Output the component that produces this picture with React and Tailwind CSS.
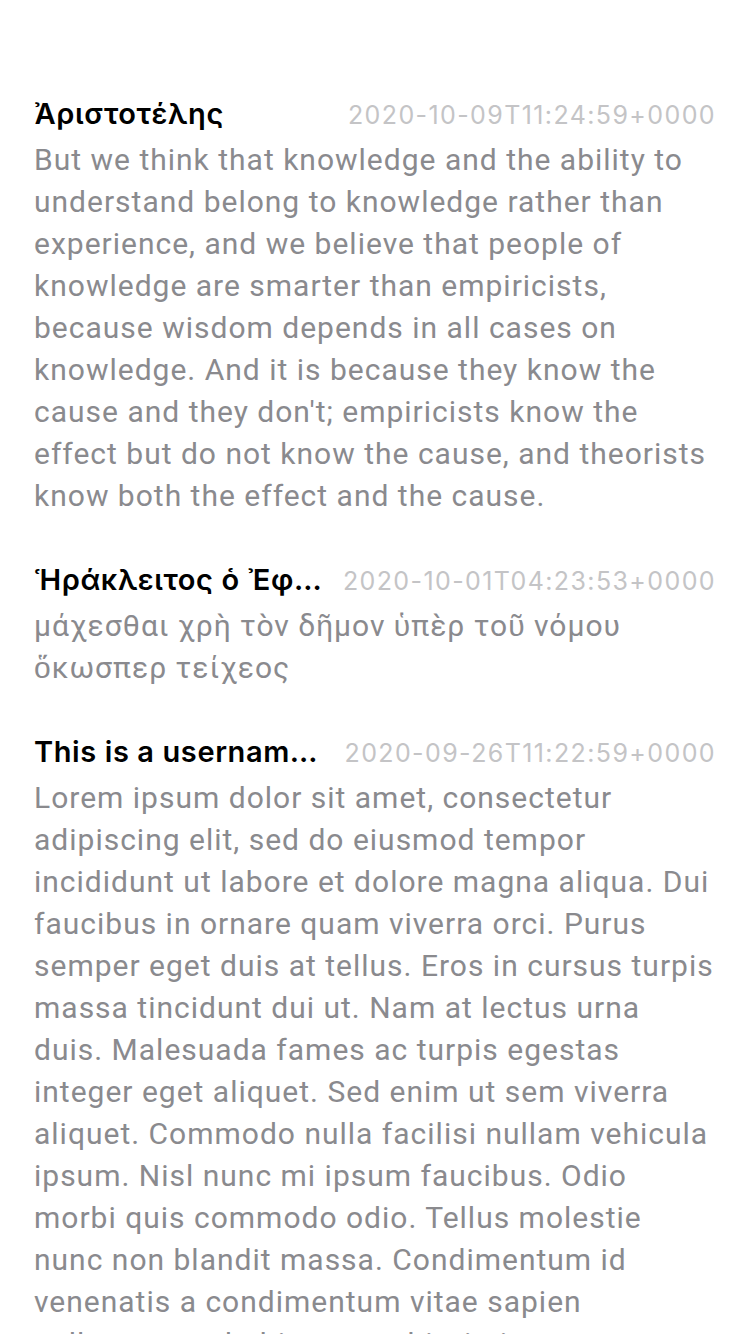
const posts = [
  {
    name: 'Ἀριστοτέλης',
    time: '2020-10-09T11:24:59+0000',
    body: "But we think that knowledge and the ability to understand belong to knowledge rather than experience, and we believe that people of knowledge are smarter than empiricists, because wisdom depends in all cases on knowledge. And it is because they know the cause and they don't; empiricists know the effect but do not know the cause, and theorists know both the effect and the cause.",
  },
  {
    name: 'Ἡράκλειτος ὁ Ἐφέσιος',
    time: '2020-10-01T04:23:53+0000',
    body: 'μάχεσθαι χρὴ τὸν δῆμον ὑπὲρ τοῦ νόμου ὅκωσπερ τείχεος',
  },
  {
    name: 'This is a username that is very long',
    time: '2020-09-26T11:22:59+0000',
    body: 'Lorem ipsum dolor sit amet, consectetur adipiscing elit, sed do eiusmod tempor incididunt ut labore et dolore magna aliqua. Dui faucibus in ornare quam viverra orci. Purus semper eget duis at tellus. Eros in cursus turpis massa tincidunt dui ut. Nam at lectus urna duis. Malesuada fames ac turpis egestas integer eget aliquet. Sed enim ut sem viverra aliquet. Commodo nulla facilisi nullam vehicula ipsum. Nisl nunc mi ipsum faucibus. Odio morbi quis commodo odio. Tellus molestie nunc non blandit massa. Condimentum id venenatis a condimentum vitae sapien pellentesque habitant morbi tristique.',
  },
]

export default function App() {
  return (
    <div className="h-[1334px] overflow-hidden bg-white px-[34px] pt-[95px] font-['Inter',sans-serif]">
      <div className="flex flex-col gap-[44px]">
        {posts.map(p => (
          <div key={p.time}>
            <div className="flex items-baseline gap-[10px]">
              <p className="min-w-0 flex-1 truncate text-[29px] font-semibold leading-[38px] tracking-[0.6px] text-black">{p.name}</p>
              <p className="shrink-0 text-[25px] leading-[38px] tracking-[1.4px] text-[#c4c4c6]">{p.time}</p>
            </div>
            <p className="mt-[5px] font-['Roboto',sans-serif] text-[30px] leading-[42px] tracking-[1px] text-[#8a8a8e]">{p.body}</p>
          </div>
        ))}
      </div>
    </div>
  )
}
